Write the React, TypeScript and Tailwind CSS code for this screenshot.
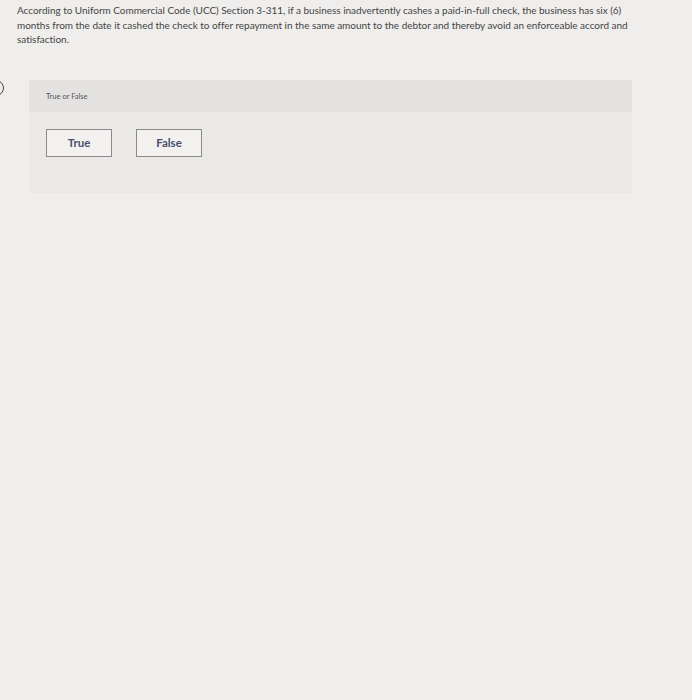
const App = () => {
  return (
    <div className="min-h-[700px] w-full bg-[#efeeec] font-['Lato',sans-serif] text-[#444]">
      <div className="pl-[17px] pr-[40px] pt-[3px] text-[10px] leading-[14.5px] tracking-[-0.03px]">
        According to Uniform Commercial Code (UCC) Section 3-311, if a business inadvertently cashes a paid-in-full check, the business has six (6)
        <br />
        months from the date it cashed the check to offer repayment in the same amount to the debtor and thereby avoid an enforceable accord and
        <br />
        satisfaction.
      </div>
      <div className="mt-[33px] flex">
        <div className="-ml-[12px] mr-[25px] h-[16px] w-[16px] rounded-full border-[1.5px] border-[#444]" />
        <div className="w-[603px] bg-[#eae9e7]">
          <div className="h-[32px] bg-[#e4e2e0] pl-[17px] pt-[12px] text-[7.5px] leading-[10px] text-[#555]">
            True or False
          </div>
          <div className="flex gap-[24px] pb-[36px] pl-[17px] pt-[17px]">
            <button className="h-[28px] w-[66px] border border-[#8a8a8a] bg-[#f2f1f0] text-[11.5px] font-bold text-[#47506b]">
              True
            </button>
            <button className="h-[28px] w-[66px] border border-[#8a8a8a] bg-[#f2f1f0] text-[11.5px] font-bold text-[#47506b]">
              False
            </button>
          </div>
        </div>
      </div>
    </div>
  );
};

export default App;
